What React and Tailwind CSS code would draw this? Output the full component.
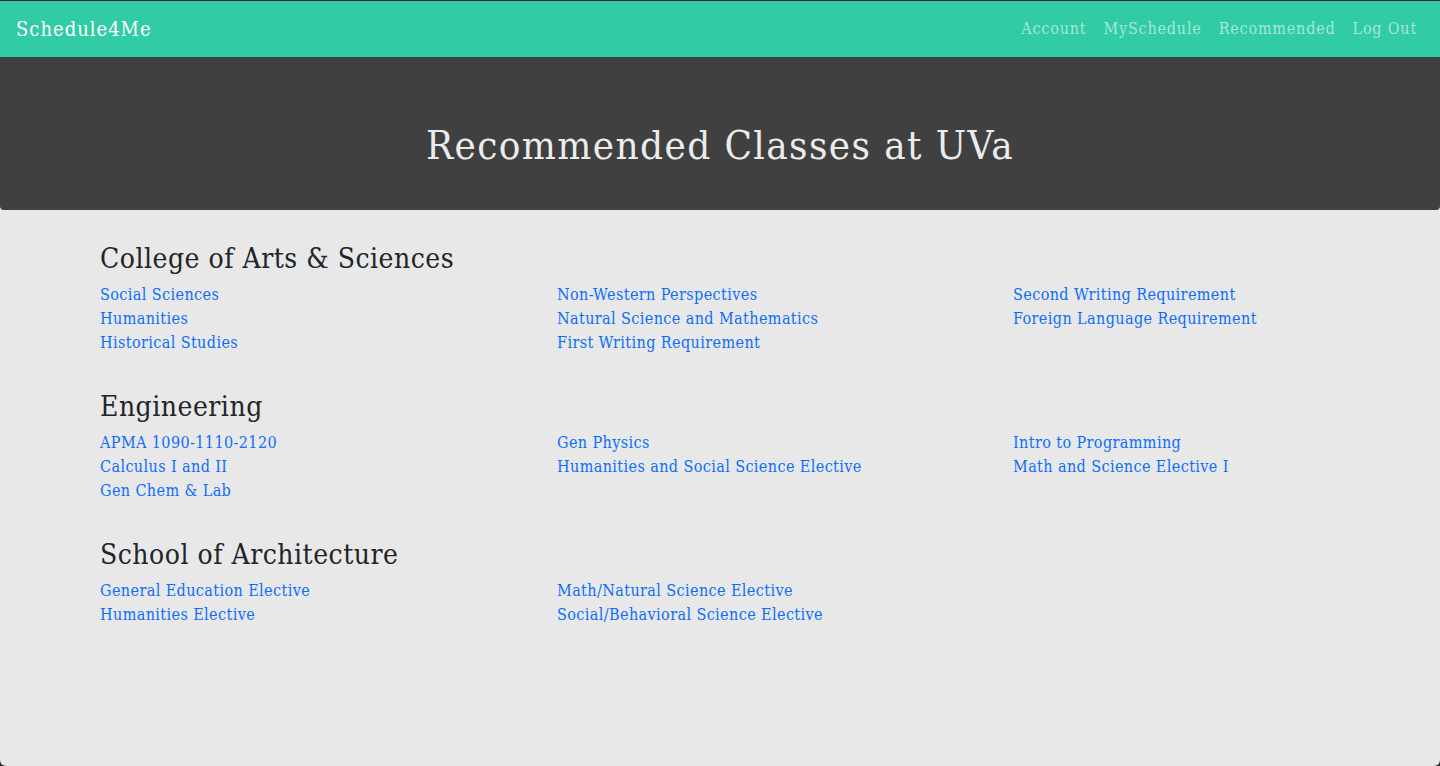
export default function App() {
  const font = { fontFamily: '"DejaVu Serif Condensed", "DejaVu Serif", serif' };
  const sections = [
    {
      title: "College of Arts & Sciences",
      cols: [
        ["Social Sciences", "Humanities", "Historical Studies"],
        ["Non-Western Perspectives", "Natural Science and Mathematics", "First Writing Requirement"],
        ["Second Writing Requirement", "Foreign Language Requirement"],
      ],
    },
    {
      title: "Engineering",
      cols: [
        ["APMA 1090-1110-2120", "Calculus I and II", "Gen Chem & Lab"],
        ["Gen Physics", "Humanities and Social Science Elective"],
        ["Intro to Programming", "Math and Science Elective I"],
      ],
    },
    {
      title: "School of Architecture",
      cols: [
        ["General Education Elective", "Humanities Elective"],
        ["Math/Natural Science Elective", "Social/Behavioral Science Elective"],
        [],
      ],
    },
  ];
  return (
    <div className="w-[1440px] h-[766px] bg-[#2a2a2a] overflow-hidden pt-px" style={font}>
      <div className="h-[765px] bg-[#e8e8e8] rounded-b-[6px] overflow-hidden flex flex-col">
        <nav className="h-[56px] bg-[#31cba5] flex items-center justify-between px-4">
          <span className="text-white text-[20px] tracking-[1px]">Schedule4Me</span>
          <div className="flex gap-[17px] text-[16px] text-[#a6e8d6] tracking-[0.8px] pr-[7px]">
            <span>Account</span>
            <span>MySchedule</span>
            <span>Recommended</span>
            <span>Log Out</span>
          </div>
        </nav>
        <header className="h-[153px] bg-[#404040] rounded-b-[4px] flex items-center justify-center">
          <h1 className="text-[40px] text-[#ececec] leading-none mt-[22px] tracking-[1.4px]">Recommended Classes at UVa</h1>
        </header>
        <main className="pl-[100px] pt-[32px]">
          {sections.map((s) => (
            <section key={s.title} className="mb-[35px]">
              <h2 className="text-[28px] leading-[34px] text-[#212529] mb-[7px] tracking-[0.5px]">{s.title}</h2>
              <div className="grid grid-cols-[457px_456px_400px]">
                {s.cols.map((c, i) => (
                  <ul key={i} className="flex flex-col">
                    {c.map((l) => (
                      <li key={l} className="text-[16px] leading-[24px] text-[#0d6efd] tracking-[0.4px]">
                        <a href="#">{l}</a>
                      </li>
                    ))}
                  </ul>
                ))}
              </div>
            </section>
          ))}
        </main>
      </div>
    </div>
  );
}
